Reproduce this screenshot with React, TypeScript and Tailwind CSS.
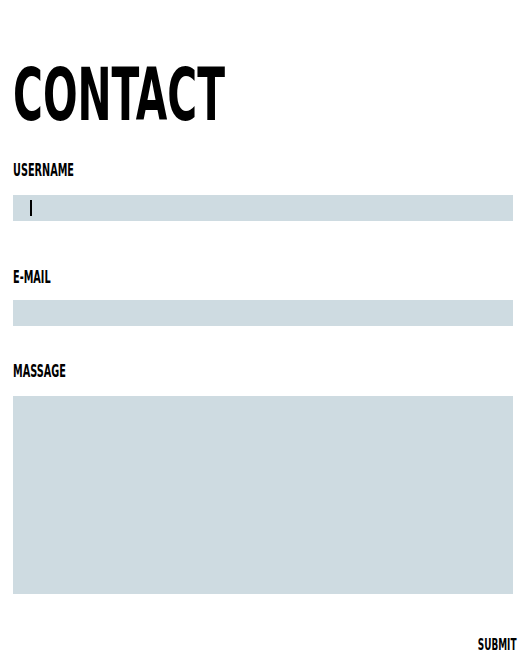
import React from "react";

const font = { fontFamily: "'DejaVu Sans Condensed', 'DejaVu Sans', sans-serif" };

function Label({ children, mt }: { children: React.ReactNode; mt: string }) {
  return (
    <div className={`${mt} h-[18px]`}>
      <span
        className="inline-block origin-left scale-x-[0.6] text-[18px] font-bold leading-none text-black whitespace-nowrap"
        style={font}
      >
        {children}
      </span>
    </div>
  );
}

export default function App() {
  return (
    <div className="w-[526px] h-[672px] bg-white pl-[13px] pr-[10px] overflow-hidden">
      <div className="pt-[58px] h-[131px]">
        <h1
          className="inline-block origin-left scale-x-[0.62] text-[73px] font-bold leading-none text-black whitespace-nowrap"
          style={font}
        >
          CONTACT
        </h1>
      </div>
      <Label mt="mt-[27px]">USERNAME</Label>
      <div className="mt-[19px] h-[26px] w-[500px] bg-[#cedbe1] flex items-center pl-[17px]">
        <span className="block w-[2px] h-[16px] bg-black" />
      </div>
      <Label mt="mt-[44px]">E-MAIL</Label>
      <div className="mt-[17px] h-[26px] w-[500px] bg-[#cedbe1]" />
      <Label mt="mt-[33px]">MASSAGE</Label>
      <div className="mt-[19px] h-[198px] w-[500px] bg-[#cedbe1]" />
      <div className="mt-[43px] flex justify-end">
        <span
          className="inline-block origin-right scale-x-[0.6] text-[16.5px] font-bold leading-none text-black whitespace-nowrap"
          style={font}
        >
          SUBMIT
        </span>
      </div>
    </div>
  );
}
